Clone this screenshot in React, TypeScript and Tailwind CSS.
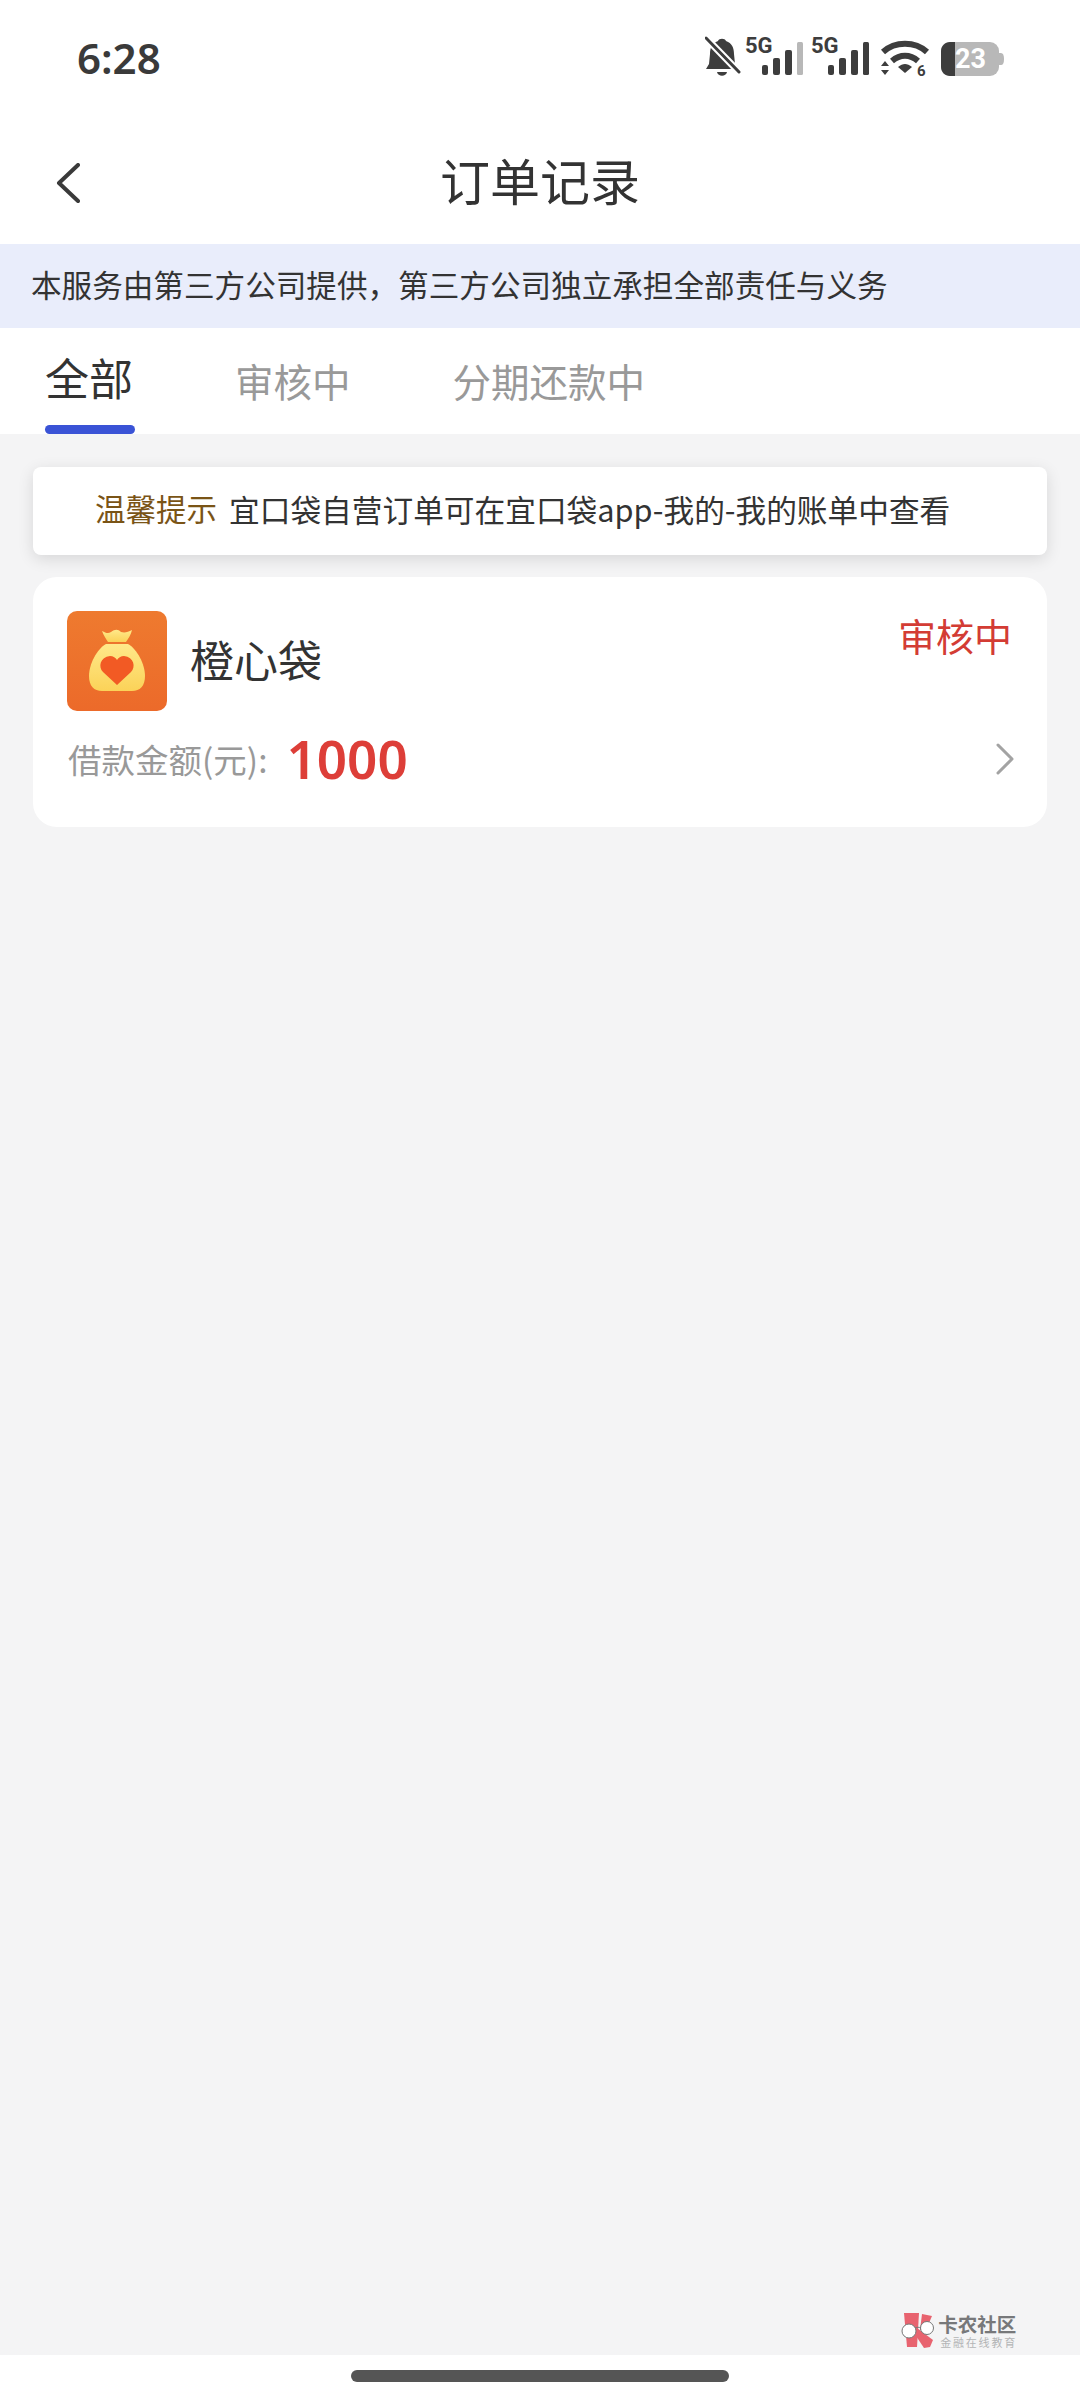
import { ChevronRight } from "lucide-react";

function StatusIcons() {
    return (
        <svg width="300" height="54" viewBox="0 -8 300 54" className="-mt-[8px] text-[#3d3d3d]" fill="currentColor">
            {/* muted bell */}
            <path d="M13 6c1-3 7-3 8 0 6 2 8 7 8 13l1 10 4 5H1l3-5 1-10c0-6 2-11 8-13z" />
            <path d="M12 37h10c-1 5-9 5-10 0z" />
            <path d="M1 3 L35 38" stroke="#fff" strokeWidth="7" />
            <path d="M1 3 L34 37" stroke="currentColor" strokeWidth="3" strokeLinecap="round" />
            {/* first signal */}
            <text x="40" y="18" fontSize="22" fontWeight="700" fontFamily="Roboto, sans-serif">5G</text>
            <rect x="57" y="30" width="6" height="10" rx="2" />
            <rect x="68" y="23" width="7" height="17" rx="2" />
            <rect x="80" y="15" width="7" height="25" rx="2" />
            <rect x="92" y="7" width="6" height="33" rx="1.500" fill="#b8b8b8" />
            {/* second signal */}
            <text x="106" y="18" fontSize="22" fontWeight="700" fontFamily="Roboto, sans-serif">5G</text>
            <rect x="123" y="30" width="6" height="10" rx="2" />
            <rect x="134" y="23" width="7" height="17" rx="2" />
            <rect x="146" y="15" width="7" height="25" rx="2" />
            <rect x="158" y="7" width="6" height="33" rx="1.500" />
            {/* wifi */}
            <path d="M178 17c12-11 32-11 44 0" fill="none" stroke="currentColor" strokeWidth="6" />
            <path d="M187 26c8-7 18-7 26 0" fill="none" stroke="currentColor" strokeWidth="6" />
            <path d="M193 32c5-4 9-4 14 0l-7 6z" />
            <path d="M176 31h8l-4-5zM176 35h8l-4 5z" />
            <text x="212" y="41" fontSize="15" fontWeight="700" fontFamily="Roboto, sans-serif">6</text>
            {/* battery */}
            <rect x="236" y="7" width="58" height="34" rx="9" fill="#b8b8b8" />
            <path d="M294 18h2c2 0 3 2 3 6s-1 6-3 6h-2z" fill="#b8b8b8" />
            <path d="M245 7h5v34h-5c-5 0-9-4-9-9V16c0-5 4-9 9-9z" />
            <text x="250" y="33" fontSize="27" fontWeight="700" fill="#fff" fontFamily="Roboto, sans-serif">23</text>
        </svg>
    );
}

function BagIcon() {
    return (
        <div className="w-[100px] h-[100px] rounded-[10px] bg-gradient-to-b from-[#ee7a2f] to-[#ec6a2a] flex items-center justify-center">
            <svg width="56" height="62" viewBox="0 0 56 62" className="-mt-[2px]">
                <defs>
                    <linearGradient id="bag" x1="0" y1="0" x2="0" y2="1">
                        <stop offset="0" stopColor="#ffe98a" />
                        <stop offset="1" stopColor="#fbd258" />
                    </linearGradient>
                </defs>
                <path d="M13 2c4 2 6 3 9 1 4-3 7-3 10 0 4 1 7 0 11-2-1 5-4 9-6 12H19C17 10 15 7 13 2z" fill="url(#bag)" />
                <path d="M17 15h22c9 5 17 20 17 32 0 10-5 15-13 15H13C5 62 0 57 0 47c0-12 8-27 17-32z" fill="url(#bag)" />
                <path d="M28 56 14 43c-5-5-3-15 7-16 3 0 6 2 7 4 1-2 4-4 7-4 10 1 12 11 7 16z" fill="#f25a24" />
            </svg>
        </div>
    );
}

function Watermark() {
    return (
        <div className="flex items-start justify-end pr-[63px] h-[42px]">
            <svg width="36" height="36" viewBox="0 0 36 36" className="mr-[2px]">
                <path d="M4 0h15l-2 34H7z" fill="#e8636f" />
                <path d="M22 1l10 2-6 14-6 0z" fill="#e8636f" />
                <path d="M17 15l16 12-3 7-6 1L14 20z" fill="#e8636f" />
                <circle cx="9" cy="18" r="7" fill="#fff" stroke="#777" strokeWidth="1" />
                <circle cx="27" cy="15" r="6.500" fill="#fff" stroke="#777" strokeWidth="1" />
                <path d="M15 15c2-1 4-1 6 0" fill="none" stroke="#777" strokeWidth="1" />
            </svg>
            <div className="flex flex-col items-start">
                <span className="text-[19.500px] leading-[22px] font-bold text-[#77787a]">卡农社区</span>
                <span className="text-[11px] leading-[14px] tracking-[1.800px] text-[#b3b4b6] ml-[2px]">金融在线教育</span>
            </div>
        </div>
    );
}

export default function App() {
    return (
        <div className="w-[1080px] h-[2400px] flex flex-col bg-[#f4f4f5] overflow-hidden font-['Noto_Sans_CJK_SC','Noto_Sans',sans-serif]">
            {/* status bar */}
            <div className="h-[118px] bg-white flex items-start justify-between pl-[77px] pr-[75px] pt-[35px]">
                <span className="text-[42px] leading-[46px] font-semibold text-[#3a3a3a] font-['Noto_Sans',sans-serif]">6:28</span>
                <StatusIcons />
            </div>

            {/* header */}
            <div className="h-[126px] bg-white relative flex items-center justify-center">
                <svg width="24" height="40" viewBox="0 0 24 40" className="absolute left-[56px] top-[45px] text-[#3a3a3a]" fill="none" stroke="currentColor" strokeWidth="4" strokeLinecap="round" strokeLinejoin="round">
                    <polyline points="22,2 3,20 22,38" />
                </svg>
                <h1 className="text-[50px] leading-[60px] font-normal text-[#333333] -mt-[4px]">订单记录</h1>
            </div>

            {/* notice */}
            <div className="h-[84px] bg-[#e9edfb] flex items-center pl-[31px] pb-[2px] text-[30.600px] text-[#333333]">
                本服务由第三方公司提供，第三方公司独立承担全部责任与义务
            </div>

            {/* tabs */}
            <div className="h-[106px] bg-white flex items-start pl-[45px]">
                <div className="relative h-full w-[90px] flex justify-center">
                    <span className="text-[44px] leading-[56px] mt-[21px] -ml-[2px] text-[#333333]">全部</span>
                    <div className="absolute left-0 bottom-0 w-[90px] h-[9px] rounded-full bg-[#3a53d6]" />
                </div>
                <span className="ml-[100px] text-[38.500px] leading-[56px] mt-[24px] text-[#999999]">审核中</span>
                <span className="ml-[102px] text-[38.500px] leading-[56px] mt-[24px] text-[#999999]">分期还款中</span>
            </div>

            {/* list */}
            <div className="flex-1 bg-[#f4f4f5] px-[33px] pt-[33px]">
                <div className="h-[88px] bg-white rounded-lg shadow-[0_4px_16px_rgba(0,0,0,0.12)] flex items-center pl-[62px] pb-[4px]">
                    <span className="text-[30.500px] text-[#7a5416]">温馨提示</span>
                    <span className="ml-[12px] text-[30.700px] text-[#333333]">宜口袋自营订单可在宜口袋app-我的-我的账单中查看</span>
                </div>

                <div className="h-[250px] mt-[22px] bg-white rounded-[24px] px-[34px] pt-[34px] relative">
                    <div className="flex items-center">
                        <BagIcon />
                        <span className="ml-[23px] -mt-[5px] text-[44px] leading-[56px] text-[#333333]">橙心袋</span>
                    </div>
                    <span className="absolute right-[35px] top-[33px] text-[38px] leading-[50px] text-[#d33c34]">审核中</span>
                    <div className="flex items-center h-[84px] mt-[6px]">
                        <span className="text-[33.500px] text-[#999999] ml-[1px]">借款金额(元):</span>
                        <span className="ml-[19px] text-[53px] leading-[60px] font-semibold text-[#dd3e38] font-['Noto_Sans',sans-serif]">1000</span>
                        <ChevronRight className="ml-auto -mr-[20px] w-[56px] h-[56px] text-[#a3a3a3]" strokeWidth={1.300} />
                    </div>
                </div>
            </div>

            <Watermark />

            {/* home indicator */}
            <div className="h-[45px] bg-white flex justify-center pt-[15px]">
                <div className="w-[378px] h-[12px] rounded-full bg-[#555555]" />
            </div>
        </div>
    );
}
